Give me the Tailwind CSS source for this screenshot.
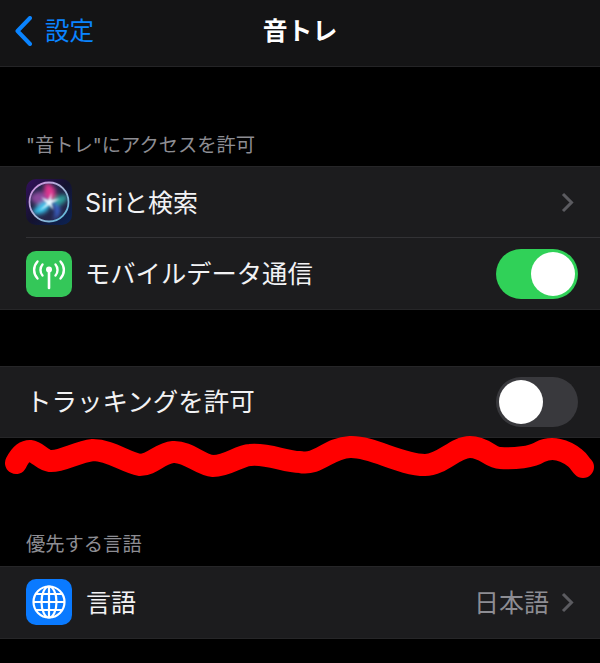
<!DOCTYPE html>
<html lang="ja">
<head>
<meta charset="utf-8">
<script src="https://cdn.jsdelivr.net/npm/@tailwindcss/browser@4"></script>
</head>
<body class="bg-black">
<div class="relative w-[600px] h-[663px] overflow-hidden bg-black font-['Inter','Noto_Sans_CJK_JP',sans-serif] text-white">

  <header class="relative flex h-[67px] items-center justify-center bg-[#141415] border-b border-[#242426]">
    <div class="absolute left-[15px] top-[16px] flex items-center gap-[13px] text-[#0a84ff]">
      <svg class="w-[17px] h-[30px]" viewBox="0 0 17 30" fill="none"><path d="M15 2 L2.5 15 L15 28" stroke="#0a84ff" stroke-width="4" stroke-linecap="round" stroke-linejoin="round"/></svg>
      <span class="text-[24.5px] leading-[30px]">設定</span>
    </div>
    <h1 class="text-[24.8px] font-bold leading-[30px] -mt-[4px]">音トレ</h1>
  </header>

  <p class="pl-[26px] pt-[66px] h-[99px] text-[19.3px] leading-[24px] text-[#8d8d93]">"音トレ"にアクセスを許可</p>

  <section class="bg-[#1c1c1e] border-y border-[#262628]">
    <div class="flex h-[70px] items-center pl-[26px] pr-[26px]">
      <svg class="w-[46px] h-[46px] shrink-0" viewBox="0 0 46 46">
        <defs>
          <linearGradient id="sbg" x1="0" y1="0" x2="1" y2="1"><stop offset="0" stop-color="#33105c"/><stop offset="0.5" stop-color="#14122f"/><stop offset="1" stop-color="#0b2456"/></linearGradient>
          <linearGradient id="sring" x1="0" y1="0" x2="1" y2="1"><stop offset="0" stop-color="#d68be0"/><stop offset="0.5" stop-color="#a9b8d8"/><stop offset="1" stop-color="#4fb6d8"/></linearGradient>
          <filter id="sblur" x="-20%" y="-20%" width="140%" height="140%"><feGaussianBlur stdDeviation="2"/></filter>
          <filter id="sblur2" x="-30%" y="-30%" width="160%" height="160%"><feGaussianBlur stdDeviation="1"/></filter>
          <clipPath id="sclip"><circle cx="23" cy="23" r="19"/></clipPath>
        </defs>
        <rect width="46" height="46" rx="10" fill="url(#sbg)"/>
        <circle cx="23" cy="23" r="19.5" fill="#24264a"/>
        <g clip-path="url(#sclip)">
          <g filter="url(#sblur)">
            <path d="M4 18 C12 9 22 12 25 23 C17 29 8 27 4 18Z" fill="#8a4a9c"/>
            <path d="M20 4 C30 6 33 15 25 24 C19 18 16 10 20 4Z" fill="#e0358f"/>
            <path d="M42 17 C34 14 28 18 24 23 C29 29 38 28 42 17Z" fill="#2f9e9a"/>
            <path d="M6 34 C12 24 19 21 24 22 C25 30 18 38 6 34Z" fill="#35c0ea"/>
            <path d="M27 42 C31 34 29 27 24 22 C34 25 39 33 27 42Z" fill="#3c68d8"/>
          </g>
          <g filter="url(#sblur2)">
            <path d="M25.5 13 L25 21 L34 20 L25.5 24 L27.5 31 L23 26 L13 32 L21 24.5 L15 18 L22.5 21.5Z" fill="#e8f8ff"/>
          </g>
        </g>
        <circle cx="23" cy="23" r="19.5" fill="none" stroke="url(#sring)" stroke-width="1.8"/>
      </svg>
      <span class="ml-[13px] pt-px text-[25px] leading-[30px] text-[#f2f2f4]">Siriと検索</span>
      <svg class="ml-auto w-[13px] h-[21px]" viewBox="0 0 13 21" fill="none"><path d="M2 2 L10.5 10.5 L2 19" stroke="#5b5b60" stroke-width="3"/></svg>
    </div>
    <div class="ml-[26px] h-px bg-[#323235]"></div>
    <div class="flex h-[71px] items-center pt-px pl-[26px] pr-[22px]">
      <svg class="w-[46px] h-[46px] shrink-0" viewBox="0 0 46 46" fill="none">
        <rect width="46" height="46" rx="10" fill="#34c759"/>
        <circle cx="23" cy="18.5" r="3" fill="#fff"/>
        <path d="M23 20 V37" stroke="#fff" stroke-width="2.6" stroke-linecap="round"/>
        <path d="M16.5 13.5 C13.8 16.6 13.8 21.4 16.5 24.5 M29.5 13.5 C32.2 16.6 32.2 21.4 29.5 24.5" stroke="#fff" stroke-width="2.4" stroke-linecap="round"/>
        <path d="M11.5 10.5 C7 15.5 7 22.5 11.5 27.5 M34.5 10.5 C39 15.5 39 22.5 34.5 27.5" stroke="#fff" stroke-width="2.4" stroke-linecap="round"/>
      </svg>
      <span class="ml-[13px] text-[25.3px] leading-[30px] text-[#f2f2f4]">モバイルデータ通信</span>
      <div class="ml-auto flex h-[50px] w-[82px] items-center justify-end rounded-full bg-[#30d158] pr-[3px]">
        <div class="h-[44px] w-[44px] rounded-full bg-white"></div>
      </div>
    </div>
  </section>

  <section class="mt-[56px] bg-[#1c1c1e] border-y border-[#262628]">
    <div class="flex h-[70px] items-center pl-[26px] pr-[22px]">
      <span class="text-[25.5px] leading-[30px] text-[#f2f2f4]">トラッキングを許可</span>
      <div class="ml-auto flex h-[50px] w-[82px] items-center rounded-full bg-[#39393d] pl-[3px]">
        <div class="h-[44px] w-[44px] rounded-full bg-white"></div>
      </div>
    </div>
  </section>

  <p class="pl-[26px] pt-[94px] h-[128px] text-[19.3px] leading-[24px] text-[#8d8d93]">優先する言語</p>

  <section class="bg-[#1c1c1e] border-y border-[#262628]">
    <div class="flex h-[71px] items-center pb-px pl-[26px] pr-[26px]">
      <svg class="w-[46px] h-[46px] shrink-0" viewBox="0 0 46 46" fill="none">
        <rect width="46" height="46" rx="10" fill="#0a7aff"/>
        <g stroke="#fff" stroke-width="2.2">
          <circle cx="23" cy="23" r="15.5"/>
          <ellipse cx="23" cy="23" rx="7.5" ry="15.5"/>
          <path d="M23 7.5 V38.5 M7.5 23 H38.5 M10 15 H36 M10 31 H36"/>
        </g>
      </svg>
      <span class="ml-[14px] pt-px text-[25px] leading-[30px] text-[#f2f2f4]">言語</span>
      <span class="ml-auto pt-px text-[25px] leading-[30px] text-[#8d8d93]">日本語</span>
      <svg class="ml-[12px] w-[13px] h-[21px]" viewBox="0 0 13 21" fill="none"><path d="M2 2 L10.5 10.5 L2 19" stroke="#5b5b60" stroke-width="3"/></svg>
    </div>
  </section>

  <svg class="absolute left-0 top-0 w-[600px] h-[663px] pointer-events-none" viewBox="0 0 600 663" fill="none">
    <path d="M16 463 C20 455 24 451 30 451 C38 452 42 460 50 461 C62 462 76 452 93 450 C110 450 125 462 140 465 C152 465 160 453 173 452 C188 451 200 465 213 466 C228 466 238 456 250 455 C268 453 285 462 300 462 C318 466 328 448 350 447 C372 446 400 465 425 465 C442 465 455 447 470 447 C485 447 490 458 500 458 C515 459 532 457 540 452 C552 446 565 450 575 458 C579 461 580 464 583 467" stroke="#ff0000" stroke-width="22" stroke-linecap="round" stroke-linejoin="round"/>
  </svg>
</div>
</body>
</html>
